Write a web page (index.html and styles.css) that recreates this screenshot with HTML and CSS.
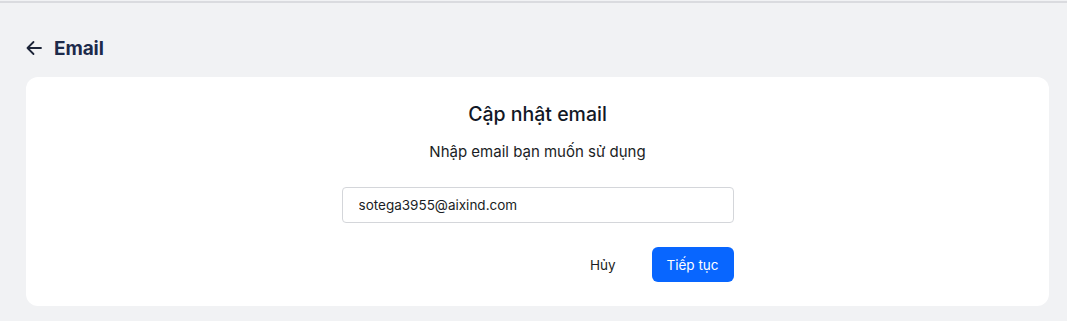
FILE: index.html
```html
<!DOCTYPE html>
<html lang="vi">
<head>
    <meta charset="UTF-8">
    <meta name="viewport" content="width=device-width, initial-scale=1.0">
    <title>Email</title>
    <link rel="stylesheet" href="styles.css">
</head>
<body>
    <div class="topline"></div>
    <div class="page">
        <div class="page-head">
            <a href="#" class="back">
                <svg width="18" height="18" viewBox="0 0 18 18" fill="none" stroke="#1c2438" stroke-width="1.8" stroke-linecap="round" stroke-linejoin="round">
                    <path d="M16 9H2.5M8.5 3L2.5 9l6 6"/>
                </svg>
            </a>
            <h1>Email</h1>
        </div>

        <div class="card">
            <h2>Cập nhật email</h2>
            <p class="sub">Nhập email bạn muốn sử dụng</p>
            <div class="form">
                <input type="text" class="field" value="sotega3955@aixind.com">
                <div class="actions">
                    <button class="btn-ghost">Hủy</button>
                    <button class="btn-primary">Tiếp tục</button>
                </div>
            </div>
        </div>
    </div>
</body>
</html>
```

FILE: styles.css
```css
body {
    margin: 0;
    padding: 0;
    background-color: #f1f2f4;
    font-family: Inter, "Noto Sans", sans-serif;
    color: #1a1d24;
}

.topline {
    height: 2px;
    margin-top: 1px;
    background-color: #dadbdf;
}

.page {
    padding: 0 18px 0 26px;
}

.page-head {
    display: flex;
    align-items: center;
    height: 58px;
    margin-top: 16px;
}

.back {
    display: flex;
    width: 18px;
    height: 18px;
    margin-right: 11px;
    margin-left: -1px;
}

.page-head h1 {
    margin: 0;
    font-size: 19px;
    font-weight: 700;
    color: #1c2a4a;
    letter-spacing: -0.1px;
}

.card {
    background-color: #fff;
    border-radius: 12px;
    height: 229px;
    box-sizing: border-box;
    padding-top: 22px;
    text-align: center;
}

.card h2 {
    margin: 0;
    font-size: 19.5px;
    font-weight: 500;
    line-height: 30px;
    color: #121826;
}

.card .sub {
    margin: 13px 0 0;
    font-size: 15px;
    line-height: 20px;
    color: #1a1d24;
}

.form {
    width: 392px;
    margin: 25px auto 0;
}

.field {
    display: block;
    width: 100%;
    box-sizing: border-box;
    height: 36px;
    border: 1px solid #d4d6da;
    border-radius: 4px;
    padding: 0 16px;
    font-family: inherit;
    font-size: 13.5px;
    color: #1a1d24;
    outline: none;
}

.actions {
    display: flex;
    justify-content: flex-end;
    align-items: center;
    gap: 24px;
    margin-top: 24px;
}

.actions button {
    font-family: inherit;
    font-size: 13.5px;
    border: none;
    cursor: pointer;
    height: 35px;
    border-radius: 6px;
}

.btn-ghost {
    background: transparent;
    color: #1a1d24;
    padding: 0 12px;
}

.btn-primary {
    background-color: #0866ff;
    color: #fff;
    width: 82px;
}
```
